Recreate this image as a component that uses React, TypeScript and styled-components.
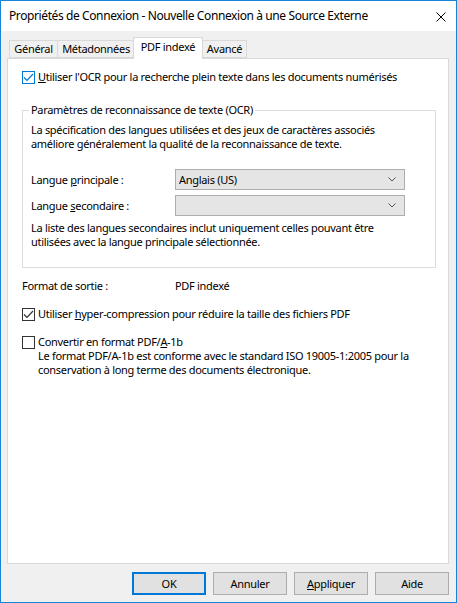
import React from 'react';
import styled, { createGlobalStyle } from 'styled-components';

const GlobalStyle = createGlobalStyle`
  html, body {
    margin: 0;
    padding: 0;
    background: #ffffff;
  }
  * {
    box-sizing: border-box;
  }
`;

const Window = styled.div`
  width: 457px;
  height: 603px;
  border: 1px solid #1883d7;
  display: flex;
  flex-direction: column;
  font-family: 'Noto Sans', 'Liberation Sans', sans-serif;
  font-size: 11px;
  line-height: 14px;
  letter-spacing: -0.3px;
  color: #000;
  background: #f0f0f0;
`;

const TitleBar = styled.div`
  height: 30px;
  background: #fff;
  display: flex;
  align-items: center;
  justify-content: space-between;
  padding: 0 10px 0 8px;
  font-size: 12px;
  letter-spacing: -0.4px;
`;

const CloseIcon = styled.svg`
  width: 10px;
  height: 10px;
  margin-top: 1px;
`;

const Body = styled.div`
  flex: 1;
  display: flex;
  flex-direction: column;
  padding: 6px 7px 7px 6px;
`;

const TabRow = styled.div`
  display: flex;
  align-items: flex-end;
  padding-left: 2px;
  height: 21px;
  position: relative;
  z-index: 1;
`;

const Tab = styled.div<{ $active?: boolean; $w: number }>`
  width: ${p => p.$w}px;
  height: ${p => (p.$active ? '22px' : '18px')};
  margin: ${p => (p.$active ? '0 0 -1px -2px' : '0 0 0 -1px')};
  padding-bottom: ${p => (p.$active ? '3px' : '0')};
  border: 1px solid #d9d9d9;
  border-bottom: ${p => (p.$active ? 'none' : '1px solid #d9d9d9')};
  background: ${p => (p.$active ? '#fff' : '#f0f0f0')};
  display: flex;
  align-items: center;
  justify-content: center;
  white-space: nowrap;
  position: relative;
  z-index: ${p => (p.$active ? 2 : 0)};
  &:first-child {
    margin-left: 0;
  }
`;

const Panel = styled.div`
  flex: 1;
  background: #fff;
  border: 1px solid #d9d9d9;
  padding: 11px 12px 0 14px;
  display: flex;
  flex-direction: column;
`;

const CheckRow = styled.div<{ $top: number }>`
  display: flex;
  align-items: flex-start;
  gap: 3px;
  margin-top: ${p => p.$top}px;
`;

const Box = styled.span<{ $focus?: boolean }>`
  width: 13px;
  height: 13px;
  flex: none;
  margin-top: 1px;
  border: 1px solid ${p => (p.$focus ? '#0078d7' : '#333')};
  background: #fff;
  display: flex;
  align-items: center;
  justify-content: center;
`;

const Group = styled.fieldset`
  margin: 19px 0 0 0;
  min-width: 0;
  border: 1px solid #dcdcdc;
  padding: 6px 12px 18px 8px;
`;

const Legend = styled.legend`
  padding: 0 2px;
  margin-left: -2px;
  line-height: 14px;
`;

const Para = styled.div<{ $top?: number }>`
  margin-top: ${p => p.$top ?? 0}px;
`;

const FieldGrid = styled.div<{ $label: number; $top: number }>`
  display: grid;
  grid-template-columns: ${p => p.$label}px 230px;
  row-gap: 5px;
  align-items: center;
  margin-top: ${p => p.$top}px;
`;

const Combo = styled.div`
  height: 21px;
  border: 1px solid #adadad;
  background: #e5e5e5;
  display: flex;
  align-items: center;
  justify-content: space-between;
  padding: 0 8px 0 3px;
`;

const ButtonRow = styled.div`
  display: flex;
  justify-content: flex-end;
  gap: 7px;
  margin-top: 8px;
`;

const Button = styled.div<{ $default?: boolean }>`
  width: 74px;
  height: 23px;
  border: ${p => (p.$default ? '2px solid #0078d7' : '1px solid #adadad')};
  background: #e1e1e1;
  display: flex;
  align-items: center;
  justify-content: center;
`;

const Check = ({ color }: { color: string }) => (
  <svg width="11" height="9" viewBox="0 0 11 9">
    <path d="M1 4.5 L4 7.5 L10 1" fill="none" stroke={color} strokeWidth="1.2" />
  </svg>
);

const Chevron = () => (
  <svg width="8" height="5" viewBox="0 0 8 5">
    <path d="M0.5 0.5 L4 4 L7.5 0.5" fill="none" stroke="#555" strokeWidth="1" />
  </svg>
);

export default function App() {
  return (
    <>
      <GlobalStyle />
      <Window>
        <TitleBar>
          <span>Propriétés de Connexion - Nouvelle Connexion à une Source Externe</span>
          <CloseIcon viewBox="0 0 10 10">
            <path d="M0.5 0.5 L9.5 9.5 M9.5 0.5 L0.5 9.5" stroke="#000" strokeWidth="1" />
          </CloseIcon>
        </TitleBar>
        <Body>
          <TabRow>
            <Tab $w={49}>Général</Tab>
            <Tab $w={78}>Métadonnées</Tab>
            <Tab $w={70} $active>
              PDF indexé
            </Tab>
            <Tab $w={45}>Avancé</Tab>
          </TabRow>
          <Panel>
            <CheckRow $top={0}>
              <Box $focus>
                <Check color="#0078d7" />
              </Box>
              <span>
                <u>U</u>tiliser l'OCR pour la recherche plein texte dans les documents numérisés
              </span>
            </CheckRow>

            <Group>
              <Legend>Paramètres de reconnaissance de texte (OCR)</Legend>
              <Para>
                La spécification des langues utilisées et des jeux de caractères associés
                <br />
                améliore généralement la qualité de la reconnaissance de texte.
              </Para>
              <FieldGrid $label={144} $top={18}>
                <span>
                  Langue <u>p</u>rincipale :
                </span>
                <Combo>
                  <span>Anglais (US)</span>
                  <Chevron />
                </Combo>
                <span>
                  Langue <u>s</u>econdaire :
                </span>
                <Combo>
                  <span />
                  <Chevron />
                </Combo>
              </FieldGrid>
              <Para $top={5}>
                La liste des langues secondaires inclut uniquement celles pouvant être
                <br />
                utilisées avec la langue principale sélectionnée.
              </Para>
            </Group>

            <FieldGrid $label={153} $top={11}>
              <span>Format de sortie :</span>
              <span>PDF indexé</span>
            </FieldGrid>

            <CheckRow $top={14}>
              <Box>
                <Check color="#333" />
              </Box>
              <span>
                Utiliser <u>h</u>yper-compression pour réduire la taille des fichiers PDF
              </span>
            </CheckRow>

            <CheckRow $top={14}>
              <Box />
              <span>
                Convertir en format PDF/<u>A</u>-1b
                <br />
                Le format PDF/A-1b est conforme avec le standard ISO 19005-1:2005 pour la
                <br />
                conservation à long terme des documents électronique.
              </span>
            </CheckRow>
          </Panel>
          <ButtonRow>
            <Button $default>OK</Button>
            <Button>Annuler</Button>
            <Button>
              <span>
                <u>A</u>ppliquer
              </span>
            </Button>
            <Button>Aide</Button>
          </ButtonRow>
        </Body>
      </Window>
    </>
  );
}
